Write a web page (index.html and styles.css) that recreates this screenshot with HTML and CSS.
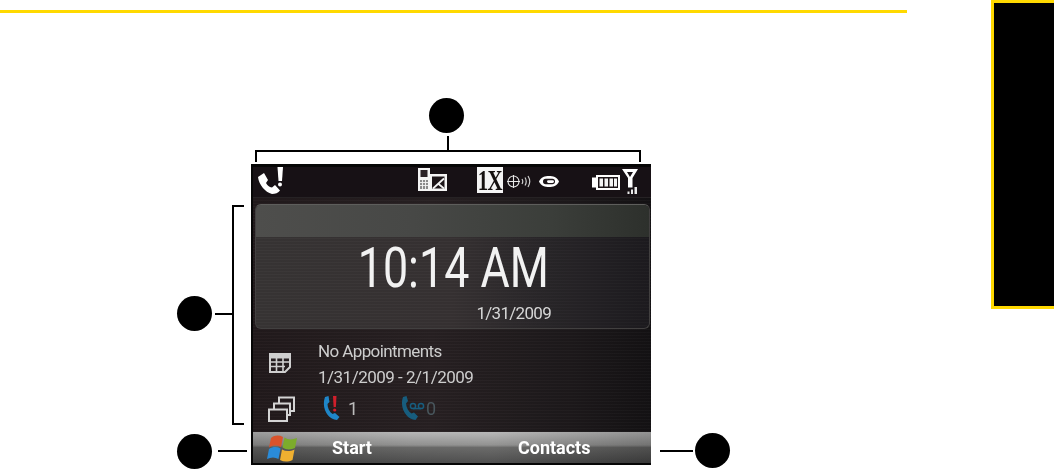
FILE: index.html
```html
<!DOCTYPE html>
<html lang="en">
<head>
<meta charset="utf-8">
<title>Today screen</title>
<link rel="stylesheet" href="styles.css">
</head>
<body>
<div class="page">
  <div class="content">
    <div class="rule"></div>
    <figure class="figure">
      <span class="dot dot-top"></span>
      <span class="stem-top"></span>
      <span class="bracket-top"></span>
      <span class="dot dot-mid"></span>
      <span class="stem-mid"></span>
      <span class="bracket-left"></span>
      <span class="dot dot-start"></span>
      <span class="stem-start"></span>
      <span class="dot dot-contacts"></span>
      <span class="stem-contacts"></span>

      <div class="phone">
        <div class="status">
          <svg class="ic-call" viewBox="0 0 26 27"><path d="M0 10 L6 6 L10 13 L8 16 C9.500 18.500 11 20 14 20.500 L17 18 L22 23.500 C20.500 26 17 27 14 27 C7 25 1 18 0 10Z" fill="#fff"/><path d="M19.500 0h5.500l-1 14h-3.500z" fill="#fff"/><circle cx="22" cy="17.500" r="2" fill="#fff"/></svg>
          <svg class="ic-msg" viewBox="0 0 29 23"><path d="M0 0h12v6h17v17H0z" fill="#f4f4f4"/><path d="M2.500 2h7v7h-7z" fill="#2a2226"/><path d="M2 12h8v9H2z" fill="#8a8a8a"/><path d="M2 14.500h8M2 17.500h8M4.500 12v9M7.500 12v9" stroke="#f4f4f4" stroke-width=".9"/><path d="M14 8.500h12.500V20.500H14z" fill="#1c1518"/><path d="M15 20.500l11-10M20 15.500l6 5" stroke="#f4f4f4" stroke-width="1.700" fill="none"/></svg>
          <span class="ic-1x"><span class="ic-1x-text">1X</span></span>
          <svg class="ic-gps" viewBox="0 0 25 13"><circle cx="6.500" cy="6.500" r="5.500" fill="none" stroke="#e8e8e8" stroke-width="1.100"/><path d="M6.500 0v13M0 6.500h13" stroke="#e8e8e8" stroke-width="1.100"/><path d="M15 4q1.500 2.500 0 5M18 2.500q2.500 4 0 8M21 1q3.500 5.500 0 11" stroke="#cfcfcf" stroke-width="1.200" fill="none"/></svg>
          <svg class="ic-eye" viewBox="0 0 20 11"><path d="M0 5.500C2 1 6 0 10 0S18 1 20 5.500C18 10 14 11 10 11S2 10 0 5.500Z" fill="#fff"/><rect x="4" y="2.800" width="12" height="5.400" rx="2.700" fill="#1c1518"/><rect x="8" y="4.200" width="7" height="2.800" rx="1.400" fill="#fff"/></svg>
          <svg class="ic-batt" viewBox="0 0 28 15"><path d="M4 2.500V0h24v15H4v-2.500H0v-10z" fill="#fff"/><path d="M6 2h20v11H6z" fill="#1c1518"/><path d="M7.500 3.500h3.500v8H7.500zM12.500 3.500H16v8h-3.500zM17.500 3.500H21v8h-3.500zM22 3.500h3v8h-3z" fill="#f4f4f4"/></svg>
          <svg class="ic-signal" viewBox="0 0 16 25"><path d="M0 0h16l-5.500 9v9.500h-4.500V9zM5 3l3 5 3-5z" fill="#fff" fill-rule="evenodd"/><path d="M5.500 22.500h2V25h-2zM9 20.500h2V25H9zM12.500 18h2.500v7h-2.500z" fill="#e8e8e8"/></svg>
        </div>
        <div class="clock-card">
          <div class="clock-band"></div>
          <div class="clock-time">10:14 AM</div>
          <div class="clock-date">1/31/2009</div>
        </div>
        <div class="today">
          <div class="today-icons">
            <svg class="ic-cal" viewBox="0 0 22 20"><path d="M1 1h20v13l-5 5H1z" fill="none" stroke="#cfcfcf" stroke-width="2"/><path d="M1 2h20v3.500H1z" fill="#cfcfcf"/><path d="M1 9h19M1 13.500h15M7.500 5v14M14 5v13" stroke="#cfcfcf" stroke-width="1.600"/></svg>
            <svg class="ic-win" viewBox="0 0 27 26"><path d="M11 7V1.500h15V15h-4" fill="none" stroke="#d4d4d4" stroke-width="2"/><path d="M6 13V7.500h16V19h-3" fill="none" stroke="#d4d4d4" stroke-width="2"/><path d="M1 13.500h18V25H1z" fill="none" stroke="#d4d4d4" stroke-width="2"/></svg>
          </div>
          <div class="today-text">
            <div class="today-line">No Appointments</div>
            <div class="today-line today-range">1/31/2009 - 2/1/2009</div>
            <div class="today-calls">
              <svg class="ic-missed" viewBox="0 0 18 24"><path d="M3 1 L6.500 0 L7.500 6 L5.500 8 C5.500 12 7.500 16 10.500 18 L13 17 L17.500 21 L15 24 C6 24 -1 12 3 1Z" fill="#1f86c8"/><path d="M11 0h3.500l-.6 11h-2.300z" fill="#d01f2b"/><circle cx="12.700" cy="14" r="1.600" fill="#d01f2b"/></svg>
              <span class="count-a">1</span>
              <svg class="ic-vm" viewBox="0 0 25 24"><path d="M3 1 L6.500 0 L8 5 L6 7.500 C6.500 12 8.500 15.500 11.500 17.500 L14 16.500 L18 20.500 L15.500 24 C7 24 -1 12 3 1Z" fill="#175d7e"/><circle cx="13" cy="10" r="2.600" fill="none" stroke="#175d7e" stroke-width="1.500"/><circle cx="21" cy="10" r="2.600" fill="none" stroke="#175d7e" stroke-width="1.500"/><path d="M13 12.600h8" stroke="#175d7e" stroke-width="1.500"/></svg>
              <span class="count-b">0</span>
            </div>
          </div>
        </div>
        <div class="softkeys">
          <svg class="ic-start" viewBox="0 0 30 28"><path d="M4 4C8 1 12 1 16 3L14 13C10 11 6 11 2 13.500Z" fill="#d9532c"/><path d="M17.500 3.500C21 6 25 6 30 4L28 14C24 16 19 16 15.500 13.500Z" fill="#7cac2c"/><path d="M2 15C6 12.500 10 12.500 13.500 14.500L11.500 25C8 23 4 23 0 25Z" fill="#2a8bd8"/><path d="M15 15.500C19 17.500 23 17.500 27.500 15.500L25.500 26C21 28 17 28 13 26Z" fill="#f0b030"/></svg>
          <span class="key key-start">Start</span>
          <span class="key key-contacts">Contacts</span>
        </div>
      </div>
    </figure>
  </div>
  <aside class="tab"></aside>
</div>
</body>
</html>
```
FILE: styles.css
```css
* { box-sizing: border-box; }
html, body { margin: 0; padding: 0; background: #fff; }
body { width: 1054px; height: 470px; overflow: hidden; font-family: Roboto, "Open Sans", sans-serif; }

.page { display: flex; height: 470px; align-items: flex-start; }
.content { width: 907px; flex: none; padding-top: 10px; }
.rule { height: 3px; background: #ffd900; }
.tab { width: 63px; height: 309px; margin-left: 84px; flex: none; background: #000; border: 3px solid #ffd900; border-right: 0; }

.figure { position: relative; margin: 151px 0 0 251px; width: 401px; height: 302px; }
.figure > span { position: absolute; background: #000; }
.dot { width: 35px; height: 35px; border-radius: 50%; }
.dot-top { left: 178px; top: -66px; }
.stem-top { left: 196px; top: -28px; width: 2px; height: 15px; }
.bracket-top { left: 4px; top: -14px; width: 386px; height: 12px; background: transparent !important; border: 2px solid #000; border-bottom: 0; }
.dot-mid { left: -74px; top: 132px; }
.stem-mid { left: -36px; top: 149px; width: 18px; height: 2px; }
.bracket-left { left: -19px; top: 41px; width: 12px; height: 220px; background: transparent !important; border: 2px solid #000; border-right: 0; }
.dot-start { left: -74px; top: 270px; }
.stem-start { left: -33px; top: 286px; width: 29px; height: 2px; }
.dot-contacts { left: 444px; top: 269px; }
.stem-contacts { left: 409px; top: 286px; width: 33px; height: 2px; }

.phone {
  width: 400px; height: 301px; border-style: solid; border-color: #060606; border-width: 3px 0 2px 2px; display: flex; flex-direction: column; color: #d8d8d8; overflow: hidden; filter: blur(.35px);
  background:
    repeating-linear-gradient(180deg, rgba(255,255,255,.02) 0 1px, rgba(0,0,0,.05) 1px 3px),
    linear-gradient(90deg, #221a1c 0%, #282123 45%, #1d191b 80%, #141214 100%);
}

.status { height: 31px; flex: none; display: flex; align-items: flex-start; background: #171115; border-bottom: 1px solid #262224; }
.status svg, .ic-1x { flex: none; }
.ic-call { width: 26px; height: 27px; margin-left: 5px; }
.ic-msg { width: 29px; height: 23px; margin: 1px 0 0 134px; }
.ic-1x { width: 26px; height: 26px; margin-left: 30px; background: #f4f4f4; display: flex; justify-content: center; }
.ic-1x-text { color: #14100f; font: 700 29px/26px "Liberation Serif", serif; letter-spacing: -1px; transform: scaleX(.72); }
.ic-gps { width: 25px; height: 13px; margin: 8px 0 0 4px; }
.ic-eye { width: 20px; height: 11px; margin: 9px 0 0 7px; }
.ic-batt { width: 28px; height: 15px; margin: 8px 0 0 33px; }
.ic-signal { width: 16px; height: 25px; margin: 2px 0 0 2px; }

.clock-card { margin: 6px 1px 0 2px; height: 125px; flex: none; border-radius: 6px; border: 1px solid #424040; border-top-color: #5e5e5c; overflow: hidden; display: flex; flex-direction: column; align-items: flex-end;
  background:
    repeating-linear-gradient(180deg, rgba(255,255,255,.015) 0 1px, rgba(0,0,0,.04) 1px 3px),
    linear-gradient(90deg, #383535 0%, #373233 50%, #2a272a 72%, #1d1b1f 100%); }
.clock-band { height: 32px; width: 100%; flex: none; background: linear-gradient(90deg, #4e4e4c 0%, #474846 40%, #3b3e3a 75%, #2d302c 100%); }
.clock-time { font-weight: 400; font-size: 56px; line-height: 56px; color: #f2f2f2; margin: 3px 100px 0 0; white-space: nowrap; transform: scaleX(.8); transform-origin: right center; }
.clock-date { font-size: 17px; line-height: 20px; letter-spacing: -.7px; color: #d6d6d6; margin: 7px 98px 0 0; }

.today { flex: 1; display: flex; padding: 9px 0 0 15px; }
.today-icons { width: 50px; flex: none; display: flex; flex-direction: column; align-items: flex-start; }
.ic-cal { width: 22px; height: 20px; margin: 15px 0 0 1px; }
.ic-win { width: 27px; height: 26px; margin: 23px 0 0 0; }
.today-line { font-size: 17px; line-height: 26px; letter-spacing: -.6px; color: #cdcdcd; white-space: nowrap; }
.today-range { letter-spacing: -.5px; }
.today-calls { display: flex; align-items: center; height: 24px; margin-top: 6px; font-size: 18px; color: #bcbcbc; }
.ic-missed { width: 18px; height: 24px; margin-left: 4px; }
.count-a { width: 10px; margin-left: 8px; }
.ic-vm { width: 25px; height: 24px; margin-left: 42px; }
.count-b { color: #48565c; margin-left: 1px; }

.softkeys { height: 31px; flex: none; display: flex; align-items: center; color: #fff; font-weight: 700; font-size: 18px;
  background:
    linear-gradient(90deg, rgba(0,0,0,.12) 0%, rgba(255,255,255,.04) 40%, rgba(255,255,255,.06) 60%, rgba(0,0,0,.18) 100%),
    linear-gradient(180deg, #b4b4b4 0%, #8c8c8b 42%, #626261 50%, #454545 100%); }
.ic-start { width: 30px; height: 28px; margin-left: 14px; flex: none; }
.key-start { margin-left: 35px; }
.key-contacts { margin-left: 146px; }
```
